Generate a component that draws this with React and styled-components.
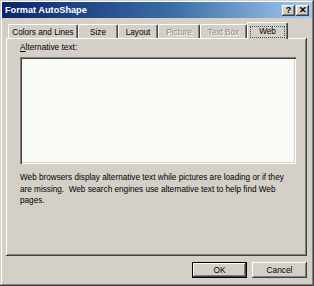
import React from 'react'
import styled, { createGlobalStyle } from 'styled-components'

const GlobalStyle = createGlobalStyle`
html, body {
  margin: 0;
  padding: 0;
  background: #d4d0c8;
}
body {
  font-family: "Liberation Sans", Arial, sans-serif;
}
`;

const raised = `
  box-shadow: inset -1px -1px #404040, inset 1px 1px #ffffff, inset -2px -2px #808080;
`;

const Window = styled.div`
width: 314px;
height: 286px;
box-sizing: border-box;
padding: 2px;
background: #d4d0c8;
display: flex;
flex-direction: column;
box-shadow: inset -1px -1px #404040, inset 1px 1px #d4d0c8, inset -2px -2px #808080, inset 2px 2px #ffffff;
`;

const TitleBar = styled.div`
height: 16px;
display: flex;
align-items: center;
gap: 1px;
padding: 0 3px 0 3px;
background: linear-gradient(90deg, #0a246a 0%, #3a6ea5 55%, #a6caf0 100%);
color: #fff;
font-weight: bold;
font-size: 9.2px;
`;

const Title = styled.div`
flex: 1;
white-space: nowrap;
`;

const TitleButton = styled.div`
width: 13px;
height: 11px;
box-sizing: border-box;
background: #d4d0c8;
color: #000;
display: flex;
align-items: center;
justify-content: center;
font-size: 9px;
font-weight: bold;
line-height: 1;
${raised}
`;

const Body = styled.div`
flex: 1;
display: flex;
flex-direction: column;
padding: 0 5px 0 4px;
`;

const TabStrip = styled.div`
height: 16px;
margin-top: 4px;
padding-left: 2px;
display: flex;
align-items: flex-end;
`;

const Tab = styled.div`
width: ${p => p.$w}px;
height: ${p => (p.$active ? 17 : 14)}px;
margin-bottom: ${p => (p.$active ? -1 : 0)}px;
box-sizing: border-box;
background: #d4d0c8;
border-top: 1px solid #fff;
border-left: 1px solid #fff;
border-right: 1px solid #404040;
border-radius: 2px 2px 0 0;
box-shadow: inset -1px 0 #808080;
display: flex;
align-items: center;
justify-content: center;
padding-top: 1px;
font-size: 8.2px;
color: ${p => (p.$disabled ? '#8a8a8a' : '#000')};
text-shadow: ${p => (p.$disabled ? '1px 1px #fff' : 'none')};
z-index: ${p => (p.$active ? 1 : 0)};
`;

const Focus = styled.span`
border: 1px dotted #505050;
padding: 1px 8px;
line-height: 8px;
`;

const Panel = styled.div`
height: 218px;
box-sizing: border-box;
padding: 4px 12px 0 14px;
${raised}
`;

const Label = styled.div`
font-size: 8.3px;
line-height: 11px;
color: #000;
`;

const TextArea = styled.div`
width: 276px;
height: 107px;
margin-top: 4px;
box-sizing: border-box;
background: #f7faf5;
box-shadow: inset 1px 1px #808080, inset 2px 2px #404040, inset -1px -1px #ffffff, inset -2px -2px #d4d0c8;
`;

const Note = styled.p`
width: 272px;
margin: 8px 0 0;
font-size: 8.2px;
line-height: 11.5px;
color: #000;
`;

const Footer = styled.div`
display: flex;
justify-content: flex-end;
gap: 5px;
margin-top: 6px;
`;

const Button = styled.div`
width: 55px;
height: 16px;
box-sizing: border-box;
display: flex;
align-items: center;
justify-content: center;
font-size: 8.3px;
color: #000;
box-shadow: ${p => (p.$default
    ? 'inset 0 0 0 1px #000, inset -2px -2px #404040, inset 2px 2px #ffffff, inset -3px -3px #808080'
    : 'inset -1px -1px #404040, inset 1px 1px #ffffff, inset -2px -2px #808080')};
`;

const tabs = [
    { title: 'Colors and Lines', w: 70 },
    { title: 'Size', w: 40 },
    { title: 'Layout', w: 40 },
    { title: 'Picture', w: 42, disabled: true },
    { title: 'Text Box', w: 47, disabled: true },
    { title: 'Web', w: 41, active: true }
]

const App = () => (
    <Window>
        <GlobalStyle />
        <TitleBar>
            <Title>Format AutoShape</Title>
            <TitleButton>?</TitleButton>
            <TitleButton>✕</TitleButton>
        </TitleBar>
        <Body>
            <TabStrip>
                {tabs.map(t => (
                    <Tab key={t.title} $w={t.w} $active={t.active} $disabled={t.disabled}>
                        {t.active ? <Focus>{t.title}</Focus> : t.title}
                    </Tab>
                ))}
            </TabStrip>
            <Panel>
                <Label><u>A</u>lternative text:</Label>
                <TextArea />
                <Note>
                    {'Web browsers display alternative text while pictures are loading or if they are missing.\u00a0 Web search engines use alternative text to help find Web pages.'}
                </Note>
            </Panel>
            <Footer>
                <Button $default>OK</Button>
                <Button>Cancel</Button>
            </Footer>
        </Body>
    </Window>
)

export default App
